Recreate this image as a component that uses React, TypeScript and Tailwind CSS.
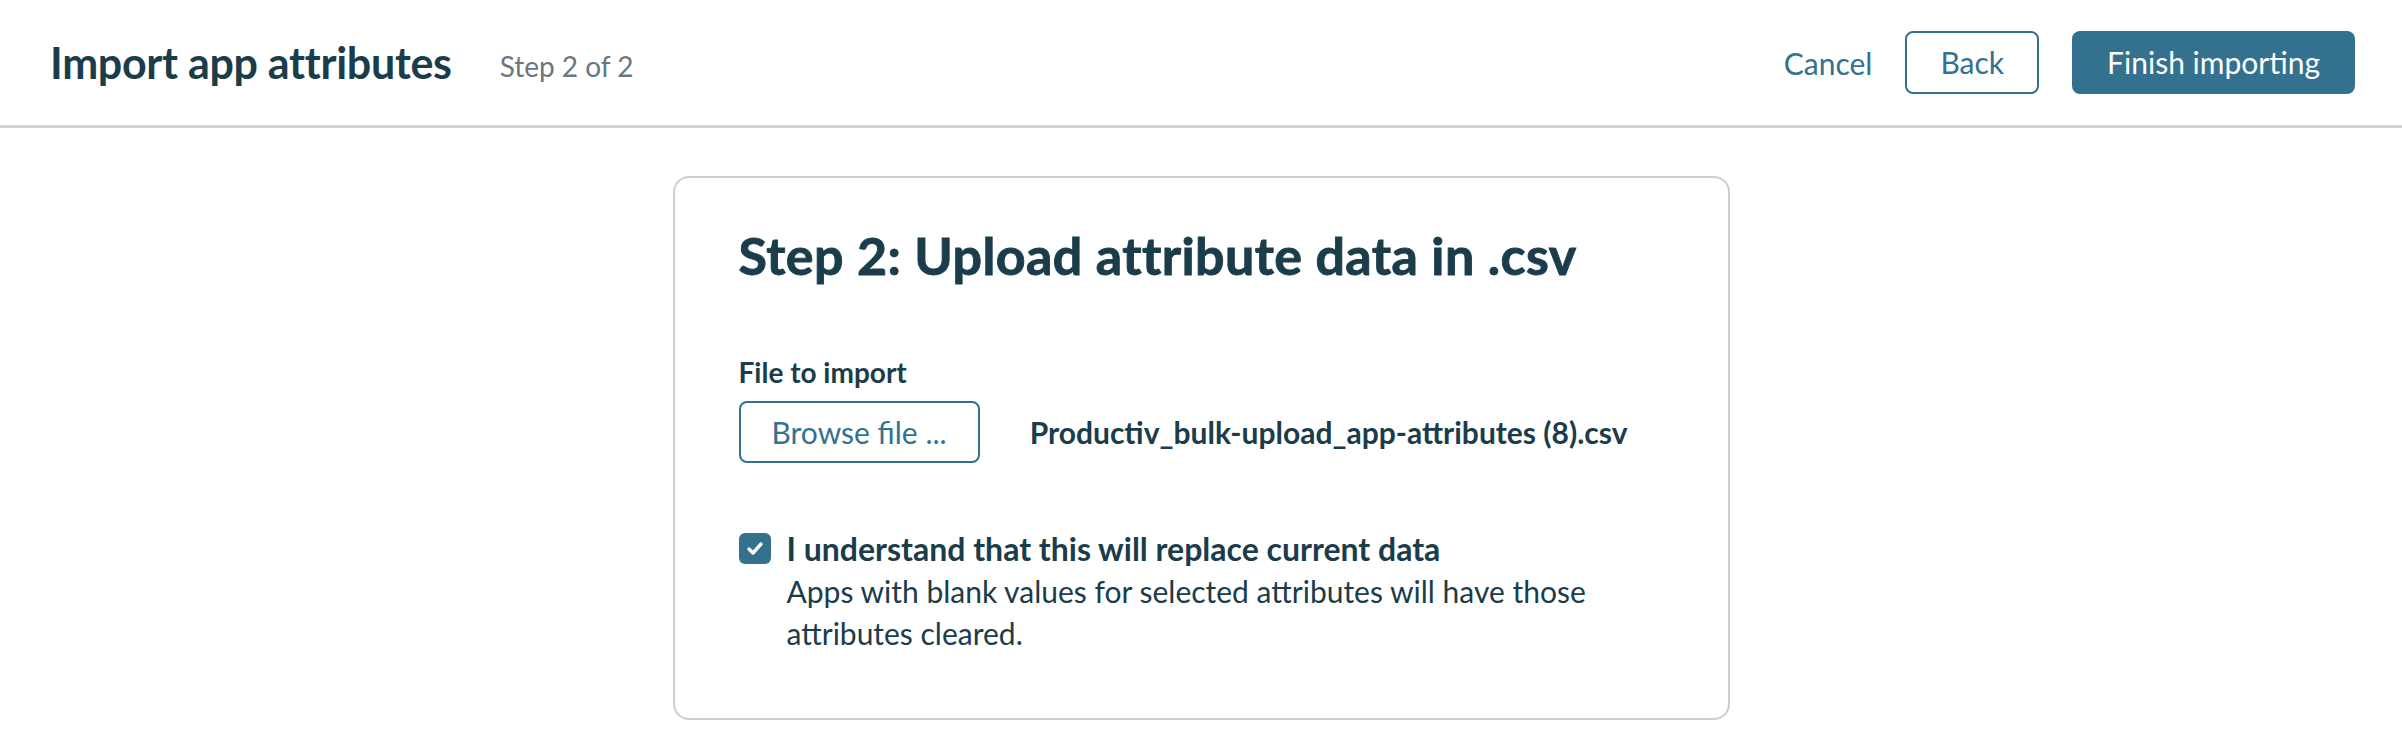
import React from "react";

const CheckIcon = () => (
  <svg width="32" height="31" viewBox="0 0 32 31" fill="none">
    <path
      d="M10 16l4 4 8-9"
      stroke="white"
      strokeWidth="3.4"
      strokeLinecap="round"
      strokeLinejoin="round"
    />
  </svg>
);

const App = () => {
  return (
    <div className="min-h-screen bg-white font-['Lato',_'Noto_Sans',_sans-serif] text-[#1b3c4a]">
      {/* header */}
      <header className="flex h-[128px] items-center justify-between border-b-[3px] border-[#d2d2d2] pl-[50px] pr-[47px]">
        <div className="flex items-center gap-[48px]">
          <h1 className="text-[43px] font-bold leading-[52px] tracking-[-0.3px]">
            Import app attributes
          </h1>
          <span className="mt-[6px] text-[28px] leading-[34px] text-[#6b7681]">Step 2 of 2</span>
        </div>
        <div className="flex items-center">
          <button className="mr-[33px] text-[30px] leading-[36px] text-[#33718f]">Cancel</button>
          <button className="flex h-[63px] items-center rounded-[8px] border-2 border-[#33718f] px-[33px] text-[30px] text-[#33718f]">
            Back
          </button>
          <button className="ml-[33px] flex h-[63px] items-center rounded-[8px] bg-[#33718f] px-[35px] text-[30px] text-white">
            Finish importing
          </button>
        </div>
      </header>

      {/* card */}
      <main className="flex justify-center pt-[48px]">
        <section className="w-[1057px] rounded-[16px] border-2 border-[#cdcdcd] px-[64px] pb-[64px] pt-[47px]">
          <h2 className="text-[52px] font-bold leading-[61px] tracking-[0.4px] [-webkit-text-stroke:0.9px_#1b3c4a]">
            Step 2: Upload attribute data in .csv
          </h2>

          <div className="mt-[69px]">
            <div className="text-[28px] font-bold leading-[34px]">File to import</div>
            <div className="mt-[12px] flex items-center gap-[50px]">
              <button className="flex h-[62px] items-center rounded-[8px] border-2 border-[#33718f] px-[31px] text-[30px] text-[#33718f]">
                Browse file ...
              </button>
              <span className="text-[30px] font-bold leading-[36px]">
                Productiv_bulk-upload_app-attributes (8).csv
              </span>
            </div>
          </div>

          <div className="mt-[65px] flex gap-[16px]">
            <div className="mt-[5px] h-[31px] w-[32px] shrink-0 rounded-[6px] bg-[#33718f]">
              <CheckIcon />
            </div>
            <div className="text-[30px] leading-[42px]">
              <div className="text-[32px] font-bold">I understand that this will replace current data</div>
              <div>Apps with blank values for selected attributes will have those attributes cleared.</div>
            </div>
          </div>
        </section>
      </main>
    </div>
  );
};

export default App;
